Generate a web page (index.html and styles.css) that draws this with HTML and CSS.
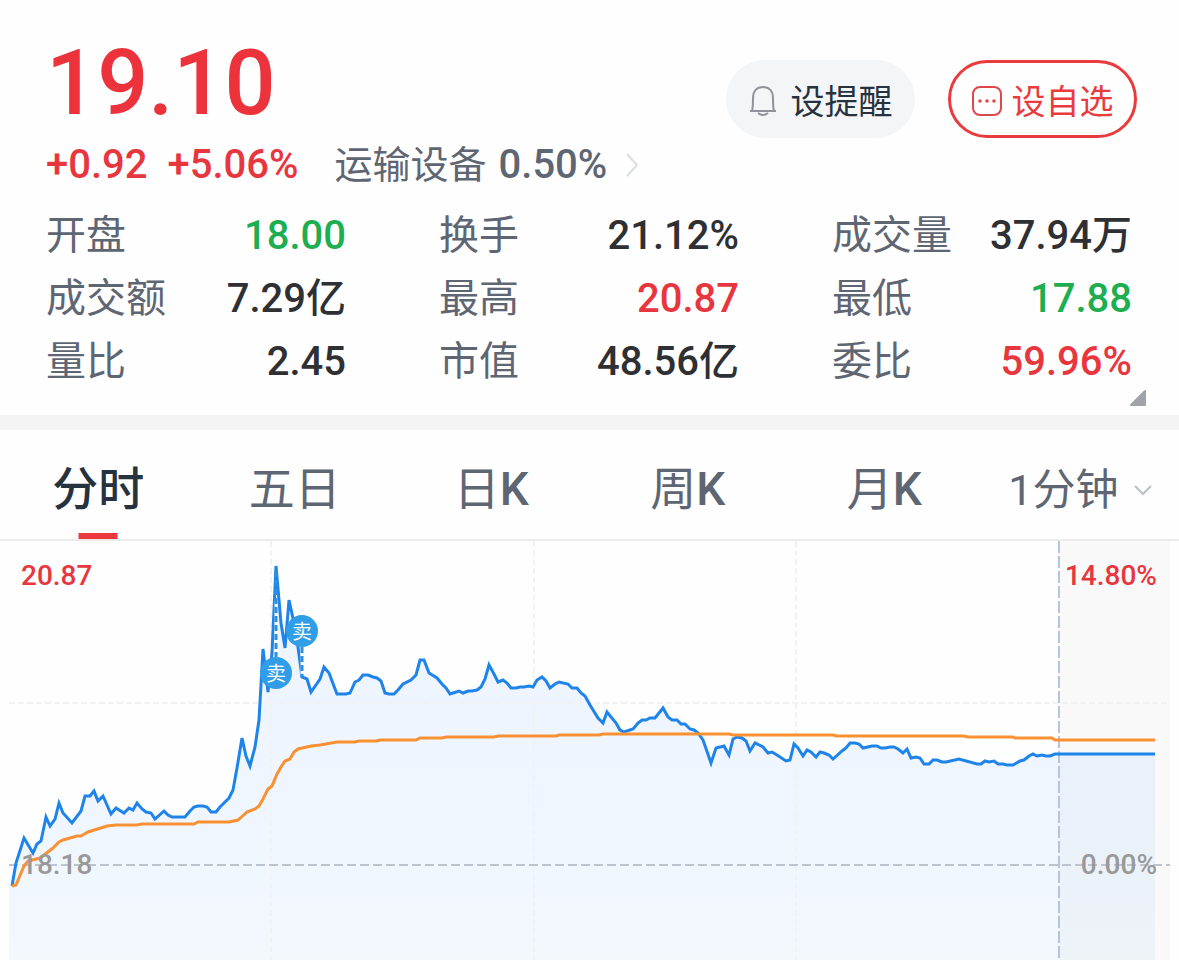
FILE: index.html
```
<!DOCTYPE html>
<html lang="zh-CN">
<head>
  <meta charset="utf-8">
  <meta name="viewport" content="width=device-width, initial-scale=1">
  <title>个股行情</title>
  <link rel="stylesheet" href="styles.css">
</head>
<body>
  <header class="quote">
    <div class="quote-top">
      <div class="price">19.10</div>
      <div class="actions">
        <button type="button" class="pill">
          <svg class="icon-bell" viewBox="0 0 28 32" aria-hidden="true">
            <path d="M1 26H27M3 26C4 23 4 20 4 13C4 6 8 2 14 2S24 6 24 13C24 20 24 23 25 26"/>
            <path d="M9 28Q14 32 19 28"/>
          </svg>
          设提醒
        </button>
        <button type="button" class="pill pill-red">
          <svg class="icon-dots" viewBox="0 0 30 30" aria-hidden="true">
            <rect x="1" y="1" width="28" height="28" rx="7"/>
            <circle cx="8" cy="15" r="1.8"/>
            <circle cx="15" cy="15" r="1.8"/>
            <circle cx="22" cy="15" r="1.8"/>
          </svg>
          设自选
        </button>
      </div>
    </div>

    <div class="change-row">
      <span class="change">+0.92</span>
      <span class="change">+5.06%</span>
      <a href="#" class="sector">
        <span class="sector-name">运输设备</span>
        <span class="sector-value">0.50%</span>
        <svg class="icon-next" viewBox="0 0 14 26" aria-hidden="true"><path d="M2 2L12 13L2 24"/></svg>
      </a>
    </div>

    <dl class="stats">
      <div class="stat"><dt>开盘</dt><dd class="down">18.00</dd></div>
      <div class="stat"><dt>换手</dt><dd>21.12%</dd></div>
      <div class="stat"><dt>成交量</dt><dd>37.94万</dd></div>
      <div class="stat"><dt>成交额</dt><dd>7.29亿</dd></div>
      <div class="stat"><dt>最高</dt><dd class="up">20.87</dd></div>
      <div class="stat"><dt>最低</dt><dd class="down">17.88</dd></div>
      <div class="stat"><dt>量比</dt><dd>2.45</dd></div>
      <div class="stat"><dt>市值</dt><dd>48.56亿</dd></div>
      <div class="stat"><dt>委比</dt><dd class="up">59.96%</dd></div>
    </dl>
    <svg class="expand" viewBox="0 0 18 18" aria-hidden="true"><path d="M16 2V16H2Z"/></svg>
  </header>

  <nav class="tabs">
    <button type="button" class="tab active">分时</button>
    <button type="button" class="tab">五日</button>
    <button type="button" class="tab">日<span class="k">K</span></button>
    <button type="button" class="tab">周<span class="k">K</span></button>
    <button type="button" class="tab">月<span class="k">K</span></button>
    <div class="tab period">
      <select aria-label="分钟周期">
        <option>1分钟</option>
        <option>5分钟</option>
      </select>
      <svg class="icon-down" viewBox="0 0 20 12" aria-hidden="true"><path d="M2 2L10 10L18 2"/></svg>
    </div>
  </nav>

  <main>
    <svg class="chart" viewBox="0 0 1179 419" role="img" aria-label="分时走势图">
      <defs>
        <linearGradient id="areaFill" gradientUnits="userSpaceOnUse" x1="0" y1="25" x2="0" y2="419">
          <stop offset="0" stop-color="#edf4fe"/>
          <stop offset="0.65" stop-color="#f0f6ff"/>
          <stop offset="1" stop-color="#f2f8fc"/>
        </linearGradient>
      </defs>

      <!-- area under the price line -->
      <path fill="url(#areaFill)" d="M9 419V345L12 345L16 322L24 297L33 312L37 303L41 300L46 276L50 285L55 278L59 262L63 272L72 282L81 270L85 255L90 255L94 250L98 260L103 255L111 273L116 267L124 272L129 267L133 269L137 262L142 268L146 271L151 272L155 278L164 270L168 274L172 276L185 276L190 270L194 266L198 265L203 265L207 266L211 271L216 271L220 266L224 262L229 257L233 249L237 227L242 197L246 215L250 225L255 206L259 179L263 108L268 151L272 112L276 25L281 82L285 107L289 59L294 82L298 106L302 136L307 138L311 151L320 138L324 126L329 132L337 153L346 153L350 152L355 141L359 139L363 134L368 134L373 136L377 137L381 140L385 152L389 153L394 153L398 149L403 143L411 139L416 134L420 119L424 119L429 132L437 137L442 143L446 147L450 153L459 150L463 152L468 150L472 150L477 149L481 146L485 138L489 124L494 133L498 141L503 139L507 142L511 147L516 147L520 146L524 146L529 145L533 146L537 139L542 136L546 140L550 147L555 143L559 141L568 143L572 147L577 147L581 152L585 155L590 164L598 177L603 182L607 171L616 182L620 189L624 191L633 188L638 182L642 179L646 179L650 177L655 177L663 167L668 176L672 179L677 179L681 183L685 183L690 188L694 189L698 192L703 199L711 222L716 207L724 205L729 214L733 198L737 196L742 197L746 200L750 210L755 202L763 206L768 212L772 211L777 214L786 220L790 219L794 203L798 207L803 215L807 209L811 211L816 216L820 211L824 212L829 214L833 218L842 210L846 207L850 202L855 202L859 203L863 207L872 205L877 205L881 207L885 207L890 206L894 206L898 208L903 212L907 208L911 217L916 216L920 217L924 223L929 223L933 219L937 219L942 221L946 221L959 218L977 223L981 223L985 220L989 221L994 220L998 223L1003 223L1007 224L1013 224L1020 220L1024 219L1029 215L1033 213L1037 215L1042 214L1046 215L1050 215L1055 213H1155V419Z"/>
      <rect class="after-hours" x="1059" y="0" width="111" height="419"/>

      <!-- grid -->
      <path class="grid" d="M9 162H1170M271 0V419M534 0V419M796 0V419"/>
      <path class="grid-base" d="M9 324H1170"/>
      <path class="grid-now" d="M1059 0V419"/>

      <polyline class="line-price" points="12,345 16,322 24,297 33,312 37,303 41,300 46,276 50,285 55,278 59,262 63,272 72,282 81,270 85,255 90,255 94,250 98,260 103,255 111,273 116,267 124,272 129,267 133,269 137,262 142,268 146,271 151,272 155,278 164,270 168,274 172,276 185,276 190,270 194,266 198,265 203,265 207,266 211,271 216,271 220,266 224,262 229,257 233,249 237,227 242,197 246,215 250,225 255,206 259,179 263,108 268,151 272,112 276,25 281,82 285,107 289,59 294,82 298,106 302,136 307,138 311,151 320,138 324,126 329,132 337,153 346,153 350,152 355,141 359,139 363,134 368,134 373,136 377,137 381,140 385,152 389,153 394,153 398,149 403,143 411,139 416,134 420,119 424,119 429,132 437,137 442,143 446,147 450,153 459,150 463,152 468,150 472,150 477,149 481,146 485,138 489,124 494,133 498,141 503,139 507,142 511,147 516,147 520,146 524,146 529,145 533,146 537,139 542,136 546,140 550,147 555,143 559,141 568,143 572,147 577,147 581,152 585,155 590,164 598,177 603,182 607,171 616,182 620,189 624,191 633,188 638,182 642,179 646,179 650,177 655,177 663,167 668,176 672,179 677,179 681,183 685,183 690,188 694,189 698,192 703,199 711,222 716,207 724,205 729,214 733,198 737,196 742,197 746,200 750,210 755,202 763,206 768,212 772,211 777,214 786,220 790,219 794,203 798,207 803,215 807,209 811,211 816,216 820,211 824,212 829,214 833,218 842,210 846,207 850,202 855,202 859,203 863,207 872,205 877,205 881,207 885,207 890,206 894,206 898,208 903,212 907,208 911,217 916,216 920,217 924,223 929,223 933,219 937,219 942,221 946,221 959,218 977,223 981,223 985,220 989,221 994,220 998,223 1003,223 1007,224 1013,224 1020,220 1024,219 1029,215 1033,213 1037,215 1042,214 1046,215 1050,215 1055,213 1155,213"/>
      <polyline class="line-avg" points="12,345 16,344 24,325 28,320 40,317 53,307 59,301 63,299 77,295 81,295 88,291 107,285 116,284 137,284 142,283 194,283 198,281 229,281 238,279 247,271 255,268 259,265 263,258 268,248 272,245 277,233 281,226 285,220 290,218 294,211 298,208 311,205 320,204 337,201 355,201 359,200 377,200 380,199 416,199 420,197 442,197 446,196 494,196 498,195 556,195 559,194 599,194 603,193 729,193 733,194 833,194 837,195 964,195 968,196 1013,196 1015,197 1052,197 1055,199 1155,199"/>

      <!-- sell markers -->
      <path class="stem-back" d="M276 60V116M302 106V134"/>
      <path class="stem" d="M276 30V116M302 106V136"/>
      <circle class="marker" cx="276" cy="132" r="16"/>
      <text class="marker-text" x="276" y="140">卖</text>
      <circle class="marker" cx="302" cy="90" r="16"/>
      <text class="marker-text" x="302" y="98">卖</text>

      <text class="axis axis-up" x="21" y="44">20.87</text>
      <text class="axis axis-up axis-right" x="1157" y="44">14.80%</text>
      <text class="axis" x="21" y="333">18.18</text>
      <text class="axis axis-right" x="1157" y="333">0.00%</text>
    </svg>
  </main>
</body>
</html>
```
FILE: styles.css
```
* {
  box-sizing: border-box;
}
body {
  margin: 0;
  background: #fefefe;
  color: #2f3033;
  font-family: Roboto, "Noto Sans CJK SC", sans-serif;
  overflow-x: hidden;
}
button, select {
  font-family: inherit;
  border: none;
  background: none;
  padding: 0;
  cursor: pointer;
}
svg {
  display: block;
  fill: none;
}

/* Quote header */
.quote {
  position: relative;
  padding: 34px 42px 22px 46px;
  border-bottom: 15px solid #f4f4f4;
}
.quote-top {
  display: flex;
  justify-content: space-between;
  align-items: flex-end;
  height: 100px;
}
.price {
  font-size: 90px;
  line-height: 100px;
  font-weight: 500;
  color: #ec323b;
}
.actions {
  display: flex;
  gap: 33px;
  height: 74px;
}
.pill {
  display: flex;
  align-items: center;
  justify-content: center;
  gap: 14px;
  width: 189px;
  height: 78px;
  border-radius: 39px;
  background: #f4f5f7;
  color: #27323f;
  font-size: 34px;
}
.pill svg {
  margin-top: 4px;
}
.pill-red {
  gap: 10px;
  background: none;
  border: 3px solid #e93b3d;
  color: #e93b3d;
}
.icon-bell {
  width: 28px;
  height: 32px;
  stroke: #8f9299;
  stroke-width: 2;
}
.icon-dots {
  width: 30px;
  height: 30px;
  stroke: #e0474b;
  stroke-width: 2;
}
.icon-dots circle {
  fill: #e0474b;
  stroke: none;
}
.change-row {
  display: flex;
  align-items: center;
  gap: 20px;
  height: 62px;
  font-size: 40px;
  line-height: 62px;
  font-weight: 500;
}
.change {
  color: #e8363e;
}
.sector {
  display: flex;
  align-items: center;
  gap: 12px;
  margin-left: 16px;
  color: #5f6673;
  text-decoration: none;
}
.sector-name {
  font-size: 38px;
  font-weight: 400;
}
.icon-next {
  width: 14px;
  height: 26px;
  margin-left: 6px;
  stroke: #dadde1;
  stroke-width: 2;
}

.stats {
  display: grid;
  grid-template-columns: repeat(3, 1fr);
  column-gap: 93px;
  margin: 8px 5px 0 0;
}
.stat {
  display: flex;
  justify-content: space-between;
  font-size: 40px;
  line-height: 63px;
}
.stat dt {
  color: #5f6673;
  font-weight: 400;
}
.stat dd {
  margin: 0;
  font-weight: 500;
}
.stat .up {
  color: #e8363e;
}
.stat .down {
  color: #1cae50;
}
.expand {
  position: absolute;
  right: 32px;
  bottom: 8px;
  width: 18px;
  height: 18px;
  fill: #a0a3a8;
  stroke: #a0a3a8;
  stroke-width: 2;
  stroke-linejoin: round;
}

/* Period tabs */
.tabs {
  display: grid;
  grid-template-columns: repeat(6, 1fr);
  height: 111px;
  border-bottom: 2px solid #ebebeb;
}
.tab {
  position: relative;
  color: #5f6673;
  font-size: 46px;
  font-weight: 400;
}
.tab.active {
  color: #27323f;
  font-weight: 500;
}
.tab.active::after {
  content: "";
  position: absolute;
  left: 50%;
  bottom: 0;
  width: 39px;
  height: 6px;
  background: #ec3a3c;
  transform: translateX(-50%);
}
.k {
  font-weight: 500;
}
.period {
  display: flex;
  align-items: center;
  justify-content: center;
  gap: 14px;
  padding-top: 10px;
}
.period select {
  appearance: none;
  color: inherit;
  font-size: 43px;
  font-weight: inherit;
}
.icon-down {
  width: 20px;
  height: 12px;
  stroke: #b9c0c9;
  stroke-width: 2;
}

/* Chart */
.chart {
  width: 100%;
  height: auto;
}
.after-hours {
  fill: #000;
  fill-opacity: 0.02;
}
.grid {
  stroke: #f1f2f3;
  stroke-width: 2;
  stroke-dasharray: 6 3;
}
.grid-base {
  stroke: #bcc4d0;
  stroke-width: 2;
  stroke-dasharray: 9 4;
}
.grid-now {
  stroke: #b4c6dc;
  stroke-width: 2;
  stroke-dasharray: 12 3;
}
.line-price {
  stroke: #1e84ea;
  stroke-width: 3;
}
.line-avg {
  stroke: #f99133;
  stroke-width: 3;
}
.stem-back {
  stroke: #fff;
  stroke-width: 3;
}
.stem {
  stroke: #2d8fe0;
  stroke-width: 3;
  stroke-dasharray: 6 3;
}
.marker {
  fill: #309de9;
}
.marker-text {
  fill: #fff;
  font-size: 20px;
  text-anchor: middle;
}
.axis {
  fill: #999;
  font-size: 28px;
  font-weight: 500;
}
.axis-up {
  fill: #e8363e;
}
.axis-right {
  text-anchor: end;
}
```
